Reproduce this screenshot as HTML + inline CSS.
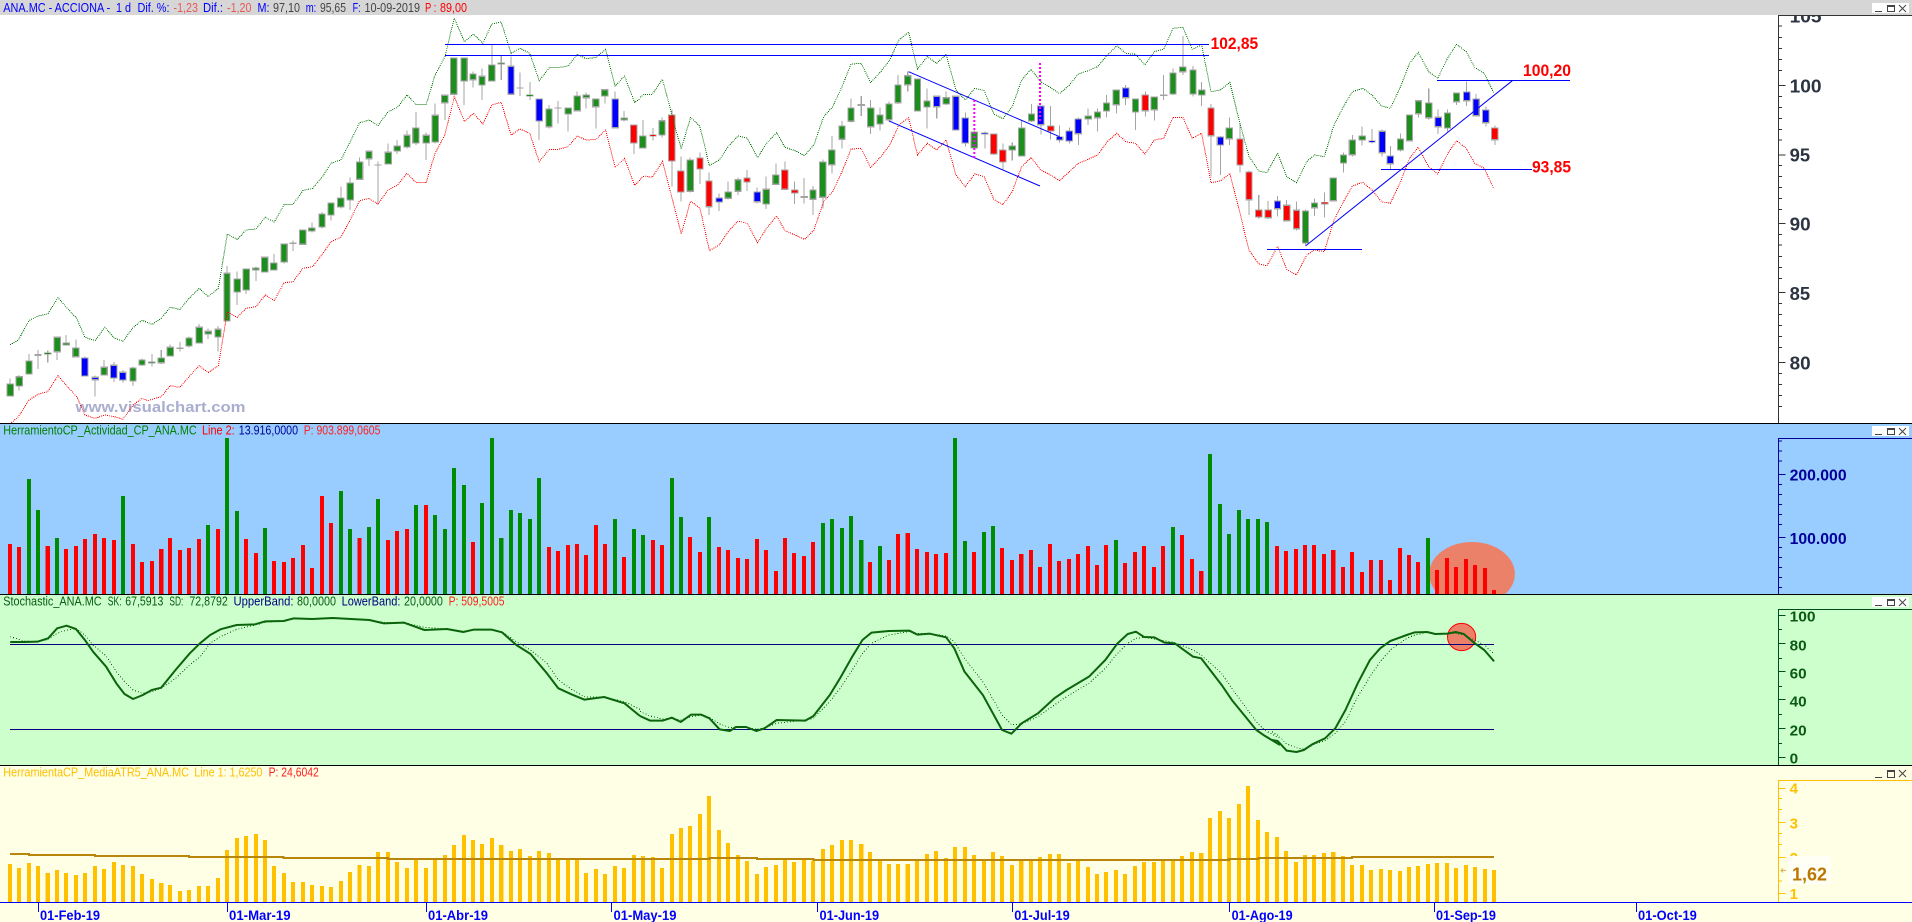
<!DOCTYPE html>
<html><head><meta charset="utf-8"><title>ANA.MC - ACCIONA</title>
<style>
html,body{margin:0;padding:0;background:#fff;overflow:hidden}
svg{display:block;font-family:"Liberation Sans",Arial,sans-serif}
.b{stroke-width:10;fill:none;shape-rendering:crispEdges}
.w{stroke:#a4a4a4;stroke-width:2.6;fill:none;shape-rendering:crispEdges}
.g{stroke:#a4a4a4;stroke-width:18;fill:none;shape-rendering:crispEdges}
.f{stroke-width:13;fill:none;shape-rendering:crispEdges}
.d{fill:none;stroke-width:1;stroke-dasharray:1 1;vector-effect:non-scaling-stroke;shape-rendering:crispEdges}
.s{fill:none;stroke:#0b640b;stroke-width:2;vector-effect:non-scaling-stroke;stroke-linejoin:round}
.sd{fill:none;stroke:#0b640b;stroke-width:1;stroke-dasharray:1 2;vector-effect:non-scaling-stroke;shape-rendering:crispEdges}
.t{fill:none;stroke-width:1;vector-effect:non-scaling-stroke;shape-rendering:crispEdges}
.a{fill:none;stroke:#b8860b;stroke-width:2;vector-effect:non-scaling-stroke;shape-rendering:crispEdges}
.bl{stroke:#0000ff;stroke-width:1;fill:none}
text{font-size:13px}
.lab{font-weight:bold;font-size:17px;fill:#ff0000}
</style></head><body>
<svg xmlns="http://www.w3.org/2000/svg" width="1912" height="922" viewBox="0 0 1912 922" lengthAdjust="spacingAndGlyphs">

<!-- MAIN PANEL -->
<rect x="0" y="0" width="1912" height="424" fill="#fff"/>
<text x="75.5" y="412" textLength="170" lengthAdjust="spacingAndGlyphs" style="font-size:15px;font-weight:bold" fill="#a9add0">www.visualchart.com</text>

<g transform="translate(0,0) scale(.40816,.33333)">
<path class="w" d="M25 1135V1190M47 1125V1172M71 1062V1124M93 1050V1107M117 1052V1088M140 1010V1080M162 1005V1037M186 1018V1072M208 1070V1130M233 1127V1190M255 1080V1127M279 1086V1146M301 1110V1148M326 1100V1158M348 1075V1098M372 1062V1100M395 1050V1092M417 1033V1070M441 1026V1055M463 1010V1043M488 972V1031M510 985V1017M534 978V1055M556 798V965M581 815V915M603 805V882M627 800V843M649 770V818M671 762V812M696 730V790M718 722V753M742 688V735M764 667V698M789 636V686M811 607V662M835 560V625M858 532V630M881 472V540M904 452V498M926 484V615M951 430V494M973 420V462M997 392V445M1019 336V435M1044 397V480M1066 310V430M1090 283V360M1112 172V285M1137 172V315M1159 215V263M1181 205V300M1205 133V245M1228 168V240M1252 170V285M1274 218V288M1298 246V300M1321 295V420M1345 315V385M1367 303V370M1392 322V395M1414 274V335M1436 277V325M1460 295V385M1482 267V310M1507 275V385M1529 333V365M1553 373V462"/>
<path class="g" d="M25 1150V1190M47 1128V1160M71 1081V1124M93 1062V1068M117 1057V1064M140 1010V1057M162 1027V1037M186 1042V1072M208 1072V1130M233 1130V1141M255 1100V1127M279 1094V1136M301 1115V1142M326 1102V1145M348 1078V1097M372 1084V1090M395 1072V1090M417 1040V1070M441 1042V1047M463 1012V1040M488 980V1031M510 992V1004M534 986V1013M556 818V965M581 835V878M603 805V872M627 802V812M649 770V818M671 787V812M696 730V788M718 727V732M742 688V735M764 682V695M789 640V683M811 607V647M835 592V623M858 547V602M881 484V540M904 452V478M926 494V497M951 455V494M973 436V455M997 404V443M1019 382V431M1044 404V431M1066 344V428M1090 284V310M1112 172V285M1137 172V245M1159 220V241M1181 227V257M1205 193V245M1228 187V193M1252 197V285M1274 262V266M1298 283V290M1321 295V365M1345 325V382M1367 322V326M1392 322V344M1414 286V334M1436 283V295M1460 295V322M1482 267V290M1507 295V385M1529 352V362M1553 373V431"/>
<path class="f" stroke="#1c8e1c" d="M25 1154V1186M47 1132V1156M71 1085V1120M117 1059V1062M140 1014V1053M162 1031V1033M186 1046V1068M255 1104V1123M326 1106V1141M348 1082V1093M372 1086V1088M395 1076V1086M417 1044V1066M463 1016V1036M488 984V1027M510 996V1000M534 990V1009M556 822V961M581 839V874M603 809V868M627 806V808M649 774V814M671 791V808M696 734V784M742 692V731M764 686V691M789 644V679M811 611V643M835 596V619M858 551V598M881 488V536M904 456V474M951 459V490M973 440V451M997 408V439M1019 386V427M1044 408V427M1066 348V424M1090 288V306M1112 176V281M1137 176V241M1159 224V237M1181 231V253M1205 197V241M1228 189V191M1298 285V288M1345 329V378M1392 326V340M1414 290V330M1436 287V291M1460 299V318M1482 271V286M1529 356V358"/>
<path class="f" stroke="#0000ff" d="M208 1076V1126M233 1134V1137M279 1098V1132M301 1119V1138M1252 201V281M1321 299V361M1507 299V381"/>
<path class="f" stroke="#ff0000" d="M1553 377V427"/>
<polyline class="d" stroke="#007a00" points="25,1034 45,1020 71,962 93,948 117,942 142,893 165,925 188,955 208,1012 233,1022 257,982 279,1013 301,1024 326,983 348,961 373,973 395,955 417,922 441,928 463,895 488,865 510,890 535,865 557,702 581,718 603,690 627,687 650,652 672,666 696,614 718,613 742,572 766,565 790,530 811,490 835,480 858,425 881,368 904,360 926,377 951,335 974,322 997,285 1020,314 1044,314 1066,225 1090,170 1113,55 1138,125 1160,102 1183,130 1205,72 1228,66 1252,160 1274,145 1298,160 1321,242 1346,203 1367,203 1392,198 1414,163 1436,176 1460,172 1484,148 1507,258 1530,228 1555,308 1568,296"/>
<polyline class="d" stroke="#ff0000" points="28,1268 45,1250 71,1200 93,1183 117,1175 142,1127 165,1160 188,1190 208,1245 233,1255 257,1245 279,1250 301,1258 326,1215 348,1195 362,1202 395,1190 417,1157 441,1162 463,1130 488,1097 510,1118 535,1097 557,935 581,952 603,925 627,920 650,885 672,902 696,848 718,845 742,805 766,800 790,762 811,725 835,712 858,660 881,602 904,595 926,612 951,570 974,555 997,520 1020,548 1044,548 1066,460 1090,405 1113,290 1138,365 1160,340 1183,372 1205,315 1228,307 1252,405 1274,387 1298,400 1321,485 1346,448 1367,448 1392,440 1414,408 1436,420 1460,418 1484,390 1507,503 1530,475 1555,556 1568,540"/>
</g>

<g transform="translate(640,0) scale(.40816,.33333)">
<path class="w" d="M7 360V446M32 384V422M54 352V412M78 328V560M100 470V605M123 472V578M147 457V552M169 517V645M194 580V633M216 545V598M240 533V585M262 510V573M287 563V610M309 530V627M333 490V555M355 484V570M379 545V612M402 534V610M424 558V645M448 478V625M470 408V520M495 363V445M517 295V368M542 288V348M565 300V402M588 322V392M610 304V365M632 225V312M656 215V275M680 235V335M703 265V385M727 287V355M750 275V315M774 287V392M797 337V440M819 392V450M845 394V445M867 400V465M889 430V508M912 427V482M935 360V470M959 312V366M982 316V403M1006 318V418M1028 376V428M1052 382V430M1074 352V435M1098 325V375M1121 325V395M1143 285V352M1167 268V340M1190 255V315M1214 295V390M1238 274V350M1260 289V362M1283 225V300M1306 205V285M1330 108V225M1355 198V290M1376 246V318M1399 312V530M1422 408V525M1444 352V435M1470 370V518M1492 512V645M1516 585V655M1539 603V657M1562 588V650"/>
<path class="g" d="M7 406V446M32 403V410M54 360V407M78 343V485M100 511V578M123 478V576M147 472V509M169 541V622M194 592V608M216 574V597M240 537V576M262 532V548M287 574V607M309 566V614M333 523V555M355 508V570M379 568V581M402 588V594M424 568V600M448 484V594M470 448V496M495 376V420M517 322V366M542 312V318M565 322V382M588 343V374M610 310V361M632 253V310M656 225V256M680 235V335M703 301V323M727 287V322M750 291V314M774 287V392M797 352V431M819 394V446M845 397V403M867 400V464M889 448V488M912 436V452M935 382V470M959 340V365M982 316V376M1006 376V395M1028 409V422M1052 391V425M1074 355V403M1098 346V359M1121 334V355M1143 307V335M1167 268V316M1190 262V295M1214 295V338M1238 283V334M1260 289V331M1283 283V288M1306 217V284M1330 199V217M1355 208V284M1376 268V287M1399 322V409M1422 409V437M1444 382V418M1470 415V497M1492 514V601M1516 628V653M1539 628V655M1562 601V628"/>
<path class="f" stroke="#1c8e1c" d="M7 410V442M54 364V403M123 482V572M216 578V593M240 541V572M309 570V610M333 527V551M424 572V596M448 488V590M470 452V492M495 380V416M517 326V362M565 326V378M588 347V370M610 314V357M632 257V306M656 229V252M680 239V331M703 305V319M750 295V310M819 398V442M912 440V448M935 386V466M959 344V361M1098 350V355M1121 338V351M1143 311V331M1167 272V312M1214 299V334M1260 293V327M1306 221V280M1330 203V213M1355 212V280M1376 272V283M1444 386V414"/>
<path class="f" stroke="#ff0000" d="M32 405V408M78 347V481M100 515V574M147 476V505M169 545V618M262 536V544M355 512V566M379 572V577M867 404V460M889 452V484M1006 380V391M1238 287V330M1399 326V405M1470 419V493M1492 518V597M1516 632V649M1539 632V651"/>
<path class="f" stroke="#0000ff" d="M194 596V604M287 578V603M727 291V318M774 291V388M797 356V427M845 399V401M982 320V372M1028 411V418M1052 395V421M1074 359V399M1190 266V291M1422 413V433M1562 605V624"/>
<polyline class="d" stroke="#007a00" points="0,292 10,283 30,283 55,238 78,345 101,447 124,352 147,380 170,497 194,480 216,440 240,408 263,415 288,473 310,430 335,398 355,442 380,452 403,467 426,435 450,350 472,320 495,260 517,192 542,190 565,248 590,215 612,180 634,120 658,97 680,207 704,170 727,190 750,163 774,270 797,300 820,265 843,272 867,342 889,356 912,320 935,240 958,208 982,245 1006,263 1028,281 1052,255 1074,222 1098,212 1121,200 1145,165 1168,137 1190,160 1214,163 1237,195 1260,155 1283,148 1306,85 1330,82 1353,148 1376,135 1399,275 1422,270 1445,247 1468,360 1492,470 1516,513 1536,518 1562,460"/>
<polyline class="d" stroke="#ff0000" points="0,538 10,528 30,532 55,484 78,590 101,702 124,603 147,625 170,752 194,735 216,695 240,663 263,670 288,728 310,685 335,648 355,692 380,705 403,718 426,690 450,605 472,575 495,515 517,447 542,445 565,503 590,470 612,435 634,375 658,353 680,465 704,430 727,450 750,420 774,525 797,560 820,522 843,530 867,598 889,614 912,575 935,500 958,472 982,510 1006,525 1028,542 1052,515 1074,490 1098,478 1121,465 1145,425 1168,400 1190,425 1214,430 1237,462 1260,420 1283,415 1306,352 1330,352 1353,415 1376,400 1399,548 1422,543 1445,520 1468,630 1492,750 1516,792 1536,797 1562,740"/>
</g>

<g transform="translate(1272,0) scale(.40816,.33333)">
<path class="w" d="M36 600V665M60 605V692M82 628V735M104 595V648M129 578V653M150 532V604M175 457V518M197 405V470M221 380V437M245 387V430M270 388V470M290 438V507M315 400V455M337 343V425M359 300V353M384 266V358M407 328V402M430 328V395M452 277V315M477 245V318M500 282V350M524 320V380M546 376V435"/>
<path class="g" d="M36 614V664M60 629V688M82 631V731M104 607V625M129 606V613M150 532V604M175 463V491M197 418V466M221 406V422M245 421V428M270 392V460M290 466V493M315 415V452M337 343V424M359 300V343M384 307V355M407 350V382M430 337V386M452 277V307M477 274V304M500 295V349M524 328V370M546 382V421"/>
<path class="f" stroke="#1c8e1c" d="M82 635V727M104 611V621M150 536V600M175 467V487M197 422V462M221 410V418M315 419V448M337 347V420M359 304V339M384 311V351M430 341V382M452 281V303"/>
<path class="f" stroke="#ff0000" d="M36 618V660M60 633V684M129 608V611M546 386V417"/>
<path class="f" stroke="#0000ff" d="M245 423V426M270 396V456M290 470V489M407 354V378M477 278V300M500 299V345M524 332V366"/>
<polyline class="d" stroke="#007a00" points="14,460 36,530 60,548 85,485 104,465 128,470 152,375 175,320 197,275 222,265 245,285 268,318 290,325 315,260 337,190 358,157 384,215 406,235 430,175 452,133 476,155 497,203 520,220 543,278"/>
<polyline class="d" stroke="#ff0000" points="14,740 36,808 60,825 85,765 104,750 128,755 152,660 175,605 197,558 222,547 245,570 268,605 290,610 315,545 337,475 358,442 384,500 406,522 430,462 452,422 476,445 497,490 520,505 543,565"/>
<path class="t" stroke="#333" d="M1241 78H1249M1241 112H1249M1241 145H1249M1241 178H1249M1241 212H1249M1241 257H1258M1241 290H1249M1241 323H1249M1241 355H1249M1241 388H1249M1241 420H1249M1241 465H1258M1241 497H1249M1241 530H1249M1241 563H1249M1241 595H1249M1241 628H1249M1241 670H1258M1241 703H1249M1241 735H1249M1241 770H1249M1241 803H1249M1241 835H1249M1241 877H1258M1241 910H1249M1241 943H1249M1241 977H1249M1241 1010H1249M1241 1043H1249M1241 1087H1258M1241 1120H1249M1241 1153H1249M1241 1187H1249M1241 1220H1249"/>
</g>

<!-- main drawn lines -->
<path class="bl" shape-rendering="crispEdges" d="M445 44.5H1209M445 55.5H1209M1267 249.5H1362M1437 80.5H1570M1381 169.5H1532"/>
<path class="bl" d="M908.6 71.7L1059.6 136.7M889 121L1040 186M1305.5 246L1512.8 80.3"/>
<path fill="none" stroke="#ff00ff" stroke-width="2" stroke-dasharray="2 2" d="M974.3 100V158M1040 63V122"/>
<text class="lab" x="1210.6" y="49" textLength="47.5" lengthAdjust="spacingAndGlyphs">102,85</text>
<text class="lab" x="1523" y="76" textLength="48" lengthAdjust="spacingAndGlyphs">100,20</text>
<text class="lab" x="1532" y="172.7" textLength="39" lengthAdjust="spacingAndGlyphs">93,85</text>

<!-- main axis -->
<path d="M1778.5 15V423" stroke="#333" fill="none"/>
<g font-weight="bold" fill="#2b3440">
<text x="1789.6" y="22.7" textLength="32" lengthAdjust="spacingAndGlyphs" style="font-size:18px">105</text>
<text x="1789.6" y="92.7" textLength="32" lengthAdjust="spacingAndGlyphs" style="font-size:18px">100</text>
<text x="1789.6" y="161.7" textLength="20.5" lengthAdjust="spacingAndGlyphs" style="font-size:18px">95</text>
<text x="1789.6" y="230.7" textLength="21" lengthAdjust="spacingAndGlyphs" style="font-size:18px">90</text>
<text x="1789.6" y="300" textLength="20.5" lengthAdjust="spacingAndGlyphs" style="font-size:18px">85</text>
<text x="1789.6" y="369.3" textLength="21" lengthAdjust="spacingAndGlyphs" style="font-size:18px">80</text>
</g>

<!-- title bar -->
<rect x="0" y="0" width="1912" height="15" fill="#d6d6d6"/>
<rect x="1778" y="15" width="134" height="1" fill="#333"/>
<g>
<text x="3.3" y="12" textLength="107" lengthAdjust="spacingAndGlyphs" fill="#0000ff">ANA.MC - ACCIONA -</text>
<text x="116" y="12" textLength="15" lengthAdjust="spacingAndGlyphs" fill="#0000ff">1 d</text>
<text x="137.5" y="12" textLength="32" lengthAdjust="spacingAndGlyphs" fill="#0000ff">Dif. %:</text>
<text x="173.5" y="12" textLength="24.5" lengthAdjust="spacingAndGlyphs" fill="#e85a5a">-1,23</text>
<text x="203" y="12" textLength="20" lengthAdjust="spacingAndGlyphs" fill="#0000ff">Dif.:</text>
<text x="227" y="12" textLength="24.5" lengthAdjust="spacingAndGlyphs" fill="#e85a5a">-1,20</text>
<text x="257.5" y="12" textLength="12" lengthAdjust="spacingAndGlyphs" fill="#0000ff">M:</text>
<text x="273" y="12" textLength="27" lengthAdjust="spacingAndGlyphs" fill="#444">97,10</text>
<text x="305.7" y="12" textLength="10.6" lengthAdjust="spacingAndGlyphs" fill="#0000ff">m:</text>
<text x="320" y="12" textLength="26" lengthAdjust="spacingAndGlyphs" fill="#444">95,65</text>
<text x="352.6" y="12" textLength="8" lengthAdjust="spacingAndGlyphs" fill="#0000ff">F:</text>
<text x="364.5" y="12" textLength="55.5" lengthAdjust="spacingAndGlyphs" fill="#444">10-09-2019</text>
<text x="425" y="12" textLength="11.4" lengthAdjust="spacingAndGlyphs" fill="#ff0000">P :</text>
<text x="440" y="12" textLength="27" lengthAdjust="spacingAndGlyphs" fill="#ff0000">89,00</text>
</g>
<g id="btn">
<rect x="1872" y="3" width="37" height="10" fill="#fff"/>
<path fill="none" stroke="#444" shape-rendering="crispEdges" d="M1875 11.5H1882M1887.5 6.5H1894.5V11.5H1887.5Z"/>
<path fill="none" stroke="#444" d="M1899 5L1906 12M1906 5L1899 12"/>
<path fill="none" stroke="#444" shape-rendering="crispEdges" d="M1887 5.5H1895"/>
</g>
<rect x="0" y="423" width="1912" height="1" fill="#000"/>

<!-- VOLUME PANEL -->
<rect x="0" y="424" width="1912" height="170" fill="#99ccff"/>
<g transform="translate(1272,420) scale(.40816,.33333)">
<ellipse cx="490" cy="462" rx="105" ry="96" fill="#eb8168"/>
</g>
<g transform="translate(0,420) scale(.40816,.33333)">
<path class="b" stroke="#ff0000" d="M25 522V372M47 522V381M117 522V378M162 522V387M186 522V378M208 522V357M233 522V342M255 522V354M279 522V360M326 522V372M348 522V426M372 522V423M395 522V387M417 522V354M441 522V390M463 522V384M488 522V357M534 522V327M603 522V357M627 522V399M671 522V423M696 522V426M718 522V414M742 522V375M764 522V444M789 522V228M811 522V309M881 522V354M951 522V360M973 522V333M997 522V327M1044 522V255M1159 522V366M1345 522V381M1367 522V393M1392 522V375M1414 522V372M1436 522V405M1460 522V315M1482 522V372M1529 522V411"/>
<path class="b" stroke="#008c00" d="M71 522V177M93 522V270M140 522V354M301 522V228M510 522V315M556 522V54M581 522V273M649 522V324M835 522V213M858 522V327M904 522V321M926 522V237M1019 522V255M1066 522V285M1090 522V327M1112 522V144M1137 522V195M1181 522V249M1205 522V54M1228 522V354M1252 522V270M1274 522V279M1298 522V297M1321 522V174M1507 522V297M1553 522V327"/>
</g>
<g transform="translate(640,420) scale(.40816,.33333)">
<path class="b" stroke="#ff0000" d="M32 522V360M54 522V375M123 522V351M147 522V396M194 522V381M216 522V390M240 522V414M262 522V417M287 522V357M309 522V390M333 522V453M355 522V354M377 522V399M402 522V408M424 522V366M564 522V426M610 522V420M632 522V342M656 522V339M679 522V387M703 522V396M725 522V402M750 522V399M818 522V396M887 522V384M911 522V420M934 522V402M958 522V390M980 522V441M1005 522V372M1027 522V423M1051 522V417M1073 522V402M1098 522V378M1120 522V435M1142 522V375M1188 522V429M1213 522V396M1235 522V378M1259 522V441M1281 522V378M1328 522V345M1352 522V417M1375 522V453M1561 522V378"/>
<path class="b" stroke="#008c00" d="M7 522V345M78 522V174M100 522V291M169 522V291M448 522V309M470 522V297M495 522V324M517 522V288M542 522V360M588 522V378M772 522V54M796 522V363M843 522V336M865 522V318M1166 522V360M1306 522V321M1397 522V102M1421 522V252M1443 522V342M1468 522V270M1490 522V297M1514 522V297M1536 522V306"/>
</g>
<g transform="translate(1272,420) scale(.40816,.33333)">
<path class="b" stroke="#ff0000" d="M34 522V393M59 522V387M81 522V375M103 522V375M127 522V402M150 522V390M174 522V441M196 522V396M221 522V456M243 522V420M267 522V420M289 522V480M314 522V384M336 522V405M358 522V426M404 522V450M429 522V414M451 522V441M475 522V417M497 522V435M522 522V444M544 522V510"/>
<path class="b" stroke="#008c00" d="M382 522V354"/>
<path class="t" stroke="#000099" d="M1241 63H1249M1241 93H1249M1241 123H1249M1241 163H1258M1241 193H1249M1241 223H1249M1241 253H1249M1241 283H1249M1241 313H1249M1241 352H1258M1241 382H1249M1241 412H1249M1241 442H1249M1241 472H1249M1241 502H1249"/>
</g>
<path d="M1778.5 438V594M1778 438.5H1912" stroke="#000099" fill="none"/>
<g font-weight="bold" fill="#000099">
<text x="1789.6" y="480.7" textLength="57" lengthAdjust="spacingAndGlyphs" style="font-size:16px">200.000</text>
<text x="1789.6" y="544" textLength="57" lengthAdjust="spacingAndGlyphs" style="font-size:16px">100.000</text>
</g>
<text x="3.3" y="434.7" textLength="193.4" lengthAdjust="spacingAndGlyphs" fill="#008000">HerramientoCP_Actividad_CP_ANA.MC</text>
<text x="202" y="434.7" textLength="32.7" lengthAdjust="spacingAndGlyphs" fill="#ff0000">Line 2:</text>
<text x="238.8" y="434.7" textLength="59.2" lengthAdjust="spacingAndGlyphs" fill="#000099">13.916,0000</text>
<text x="303.7" y="434.7" textLength="76.7" lengthAdjust="spacingAndGlyphs" fill="#ff2020">P: 903.899,0605</text>
<rect x="1872" y="426" width="37" height="10" fill="#fff"/>
<path fill="none" stroke="#444" shape-rendering="crispEdges" d="M1875 434.5H1882M1887.5 429.5H1894.5V434.5H1887.5ZM1887 428.5H1895"/>
<path fill="none" stroke="#444" d="M1899 428L1906 435M1906 428L1899 435"/>

<!-- STOCHASTIC PANEL -->
<rect x="0" y="594" width="1912" height="1" fill="#000"/>
<rect x="0" y="595" width="1912" height="170" fill="#ccffcc"/>
<g transform="translate(1272,590) scale(.40816,.33333)">
<ellipse cx="464.5" cy="141" rx="34.5" ry="41" fill="#eb8168" stroke="#ff0000" stroke-width="1" vector-effect="non-scaling-stroke"/>
</g>
<path fill="none" stroke="#000080" shape-rendering="crispEdges" d="M10 644.5H1494M10 729.5H1494"/>
<g transform="translate(0,590) scale(.40816,.33333)">
<polyline class="sd" points="25,140 60,153 92,155 118,148 140,130 163,120 186,115 208,135 228,165 260,198 285,245 305,275 326,300 350,310 372,305 395,295 430,265 465,225 490,200 515,160 540,140 580,118 625,105 650,97 695,93 720,87 765,87 815,85 860,87 905,90 940,97 990,98 1040,112 1095,117 1135,123 1160,120 1205,119 1230,125 1265,155 1300,180 1340,220 1368,270 1400,298 1432,320 1480,322 1530,335 1568,358"/>
<polyline class="s" points="25,156 60,156 92,155 118,145 140,115 163,107 186,117 208,150 228,185 260,230 285,280 305,312 326,327 350,315 372,300 395,293 430,240 465,190 490,160 515,135 540,118 580,105 625,103 650,94 695,93 720,85 765,87 815,84 860,87 905,90 940,100 990,98 1040,120 1095,117 1135,126 1160,119 1205,119 1230,127 1265,165 1300,192 1340,250 1368,295 1400,313 1432,329 1480,321 1530,340 1568,378"/>
</g>
<g transform="translate(640,590) scale(.40816,.33333)">
<polyline class="sd" points="0,364 25,378 55,387 78,385 100,390 125,380 150,376 170,382 195,402 220,413 235,413 260,412 285,418 305,413 335,400 405,390 425,385 465,335 490,295 520,240 545,190 567,160 610,135 660,125 680,130 710,132 750,138 770,155 795,205 840,275 887,375 910,404 935,402 975,380 1015,345 1045,320 1100,280 1140,235 1170,190 1195,160 1215,145 1235,142 1260,147 1285,152 1310,158 1355,180 1375,195 1425,250 1450,295 1510,395 1530,420 1568,445"/>
<polyline class="s" points="0,378 25,392 55,392 78,383 100,396 125,374 150,374 170,385 195,418 220,423 235,411 260,411 285,423 305,415 335,390 405,392 425,378 465,315 490,265 520,200 545,150 567,128 610,123 660,122 680,134 710,131 750,142 770,175 795,245 840,315 887,420 910,431 935,400 975,370 1015,325 1045,300 1100,260 1140,210 1170,160 1195,132 1215,125 1235,141 1260,142 1285,158 1310,160 1355,200 1375,205 1425,285 1450,330 1510,420 1530,437 1568,465"/>
</g>
<g transform="translate(1272,590) scale(.40816,.33333)">
<polyline class="sd" points="0,425 14,435 36,462 60,473 78,478 100,465 130,452 155,430 180,395 210,320 240,260 265,215 290,180 330,145 350,135 380,127 400,130 430,131 450,130 470,135 497,150 520,165 544,192"/>
<polyline class="s" points="0,450 14,453 36,482 60,486 78,480 100,462 130,445 155,415 180,360 210,280 240,210 265,175 290,153 330,135 350,127 380,126 400,132 430,131 450,126 470,132 497,160 520,180 544,214"/>
<path class="t" stroke="#004d20" d="M1241 77H1258M1241 119H1249M1241 161H1258M1241 205H1249M1241 245H1258M1241 289H1249M1241 329H1258M1241 373H1249M1241 415H1258M1241 460H1249M1241 502H1258"/>
</g>
<path d="M1778.5 609V765M1778 609.5H1912" stroke="#004d20" fill="none"/>
<g font-weight="bold" fill="#0a5a14">
<text x="1789.6" y="621.7" textLength="26" lengthAdjust="spacingAndGlyphs" style="font-size:15px">100</text>
<text x="1789.6" y="650.7" textLength="17" lengthAdjust="spacingAndGlyphs" style="font-size:15px">80</text>
<text x="1789.6" y="678.7" textLength="17" lengthAdjust="spacingAndGlyphs" style="font-size:15px">60</text>
<text x="1789.6" y="706.7" textLength="17" lengthAdjust="spacingAndGlyphs" style="font-size:15px">40</text>
<text x="1789.6" y="735.7" textLength="17" lengthAdjust="spacingAndGlyphs" style="font-size:15px">20</text>
<text x="1789.6" y="763.3" textLength="8.5" lengthAdjust="spacingAndGlyphs" style="font-size:15px">0</text>
</g>
<g fill="#0a5a14">
<text x="3.3" y="605.7" textLength="98.3" lengthAdjust="spacingAndGlyphs">Stochastic_ANA.MC</text>
<text x="107.8" y="605.7" textLength="13.8" lengthAdjust="spacingAndGlyphs">SK:</text>
<text x="125.3" y="605.7" textLength="38" lengthAdjust="spacingAndGlyphs">67,5913</text>
<text x="169.4" y="605.7" textLength="14" lengthAdjust="spacingAndGlyphs">SD:</text>
<text x="189.4" y="605.7" textLength="38.4" lengthAdjust="spacingAndGlyphs">72,8792</text>
<text x="297" y="605.7" textLength="39" lengthAdjust="spacingAndGlyphs">80,0000</text>
<text x="404" y="605.7" textLength="38.9" lengthAdjust="spacingAndGlyphs">20,0000</text>
</g>
<text x="233.5" y="605.7" textLength="60" lengthAdjust="spacingAndGlyphs" fill="#000080">UpperBand:</text>
<text x="341.6" y="605.7" textLength="58.8" lengthAdjust="spacingAndGlyphs" fill="#000080">LowerBand:</text>
<text x="448.6" y="605.7" textLength="55.9" lengthAdjust="spacingAndGlyphs" fill="#ff2020">P: 509,5005</text>
<rect x="1872" y="597" width="37" height="10" fill="#fff"/>
<path fill="none" stroke="#444" shape-rendering="crispEdges" d="M1875 605.5H1882M1887.5 600.5H1894.5V605.5H1887.5ZM1887 599.5H1895"/>
<path fill="none" stroke="#444" d="M1899 599L1906 606M1906 599L1899 606"/>

<!-- ATR PANEL -->
<rect x="0" y="765" width="1912" height="1" fill="#000"/>
<rect x="0" y="766" width="1912" height="156" fill="#ffffe6"/>
<g transform="translate(0,760) scale(.40816,.33333)">
<path class="b" stroke="#ffc000" d="M25 427V312M47 427V324M71 427V309M93 427V318M117 427V339M140 427V330M162 427V339M186 427V345M208 427V339M233 427V318M255 427V327M279 427V306M301 427V315M326 427V318M348 427V342M372 427V357M395 427V369M417 427V375M441 427V393M463 427V390M488 427V378M510 427V378M534 427V354M556 427V270M581 427V234M603 427V228M627 427V222M649 427V240M671 427V318M696 427V339M718 427V366M742 427V366M764 427V375M789 427V378M811 427V381M835 427V363M858 427V336M881 427V315M904 427V318M926 427V276M951 427V276M973 427V306M997 427V324M1019 427V297M1044 427V324M1066 427V297M1090 427V285M1112 427V255M1137 427V225M1159 427V240M1181 427V252M1205 427V234M1228 427V255M1252 427V273M1274 427V267M1298 427V288M1321 427V273M1345 427V279M1367 427V297M1392 427V297M1414 427V297M1436 427V339M1460 427V327M1482 427V342M1507 427V318M1529 427V324M1553 427V285"/>
<path class="a" d="M25 282H71V285H233V288H463V291H695V294H950V297H1568"/>
</g>
<g transform="translate(640,760) scale(.40816,.33333)">
<path class="b" stroke="#ffc000" d="M7 427V288M32 427V291M54 427V324M78 427V222M100 427V204M123 427V198M147 427V162M169 427V108M194 427V210M216 427V249M240 427V285M262 427V303M287 427V342M309 427V321M333 427V315M355 427V297M377 427V306M402 427V297M424 427V303M448 427V267M470 427V255M495 427V240M517 427V240M542 427V252M564 427V276M588 427V303M610 427V312M632 427V312M656 427V312M679 427V300M703 427V282M725 427V273M750 427V294M772 427V261M796 427V261M818 427V285M843 427V300M865 427V276M887 427V288M911 427V315M934 427V300M958 427V300M980 427V291M1005 427V282M1027 427V282M1051 427V309M1073 427V300M1098 427V321M1120 427V342M1142 427V336M1166 427V330M1188 427V342M1213 427V318M1235 427V306M1259 427V306M1281 427V300M1306 427V300M1328 427V288M1352 427V276M1375 427V279M1397 427V174M1421 427V153M1443 427V174M1468 427V132M1490 427V78M1514 427V180M1536 427V216M1561 427V231"/>
<path class="a" d="M0 297H170V294H287V297H425V300H1443V297H1515V294H1568"/>
</g>
<g transform="translate(1272,760) scale(.40816,.33333)">
<path class="b" stroke="#ffc000" d="M34 427V273M59 427V306M81 427V285M103 427V285M127 427V279M150 427V276M174 427V288M196 427V315M221 427V315M243 427V330M267 427V327M289 427V330M314 427V333M336 427V321M358 427V318M382 427V312M404 427V309M429 427V309M451 427V324M475 427V315M497 427V321M522 427V327M544 427V330"/>
<path class="a" d="M0 294H196V291H544"/>
<path class="t" stroke="#ffc000" d="M1241 85H1258M1241 115H1249M1241 148H1249M1241 187H1258M1241 220H1249M1241 253H1249M1241 292H1258M1241 363H1249M1241 400H1258"/>
</g>
<path d="M1778.5 780V902M1778 780.5H1912" stroke="#ffc000" fill="none"/>
<g font-weight="bold" fill="#ffc000">
<text x="1789.6" y="793.3" style="font-size:15px">4</text>
<text x="1789.6" y="828.3" style="font-size:15px">3</text>
<text x="1789.6" y="863" style="font-size:15px">2</text>
<text x="1789.6" y="899" style="font-size:15px">1</text>
</g>
<rect x="1788" y="856" width="43" height="28" fill="#fffff5"/>
<text x="1792" y="880.7" textLength="35" lengthAdjust="spacingAndGlyphs" font-weight="bold" fill="#bb7700" style="font-size:18px">1,62</text>
<path fill="none" stroke="#d8b050" d="M1786 870.5L1781 870.5M1783 868.5L1781 870.5L1783 872.5"/>
<text x="3.3" y="776.7" textLength="185.7" lengthAdjust="spacingAndGlyphs" fill="#ffc000">HerramientaCP_MediaATR5_ANA.MC</text>
<text x="194.3" y="776.7" textLength="68.1" lengthAdjust="spacingAndGlyphs" fill="#ffc000">Line 1: 1,6250</text>
<text x="268.6" y="776.7" textLength="50.2" lengthAdjust="spacingAndGlyphs" fill="#ff2020">P: 24,6042</text>
<path fill="none" stroke="#444" shape-rendering="crispEdges" d="M1875 777.5H1882M1887.5 771.5H1894.5V777.5H1887.5ZM1887 770.5H1895"/>
<path fill="none" stroke="#444" d="M1899 770L1906 777M1906 770L1899 777"/>

<!-- DATE AXIS -->
<rect x="0" y="902" width="1912" height="1" fill="#0000ff"/>
<path fill="none" stroke="#0000ff" shape-rendering="crispEdges" d="M38.5 902V912M227.5 902V912M426.5 902V912M611.5 902V912M817.5 902V912M1012.5 902V912M1229.5 902V912M1434.5 902V912M1636.5 902V912"/>
<g fill="#0000ff" font-weight="bold">
<text x="40" y="920" textLength="60" lengthAdjust="spacingAndGlyphs" style="font-size:14px">01-Feb-19</text>
<text x="229" y="920" textLength="61.6" lengthAdjust="spacingAndGlyphs" style="font-size:14px">01-Mar-19</text>
<text x="428" y="920" textLength="60" lengthAdjust="spacingAndGlyphs" style="font-size:14px">01-Abr-19</text>
<text x="613.5" y="920" textLength="63" lengthAdjust="spacingAndGlyphs" style="font-size:14px">01-May-19</text>
<text x="819.5" y="920" textLength="59.6" lengthAdjust="spacingAndGlyphs" style="font-size:14px">01-Jun-19</text>
<text x="1014.3" y="920" textLength="55.5" lengthAdjust="spacingAndGlyphs" style="font-size:14px">01-Jul-19</text>
<text x="1231.6" y="920" textLength="61" lengthAdjust="spacingAndGlyphs" style="font-size:14px">01-Ago-19</text>
<text x="1436" y="920" textLength="60" lengthAdjust="spacingAndGlyphs" style="font-size:14px">01-Sep-19</text>
<text x="1638" y="920" textLength="58.8" lengthAdjust="spacingAndGlyphs" style="font-size:14px">01-Oct-19</text>
</g>
</svg>
</body></html>
